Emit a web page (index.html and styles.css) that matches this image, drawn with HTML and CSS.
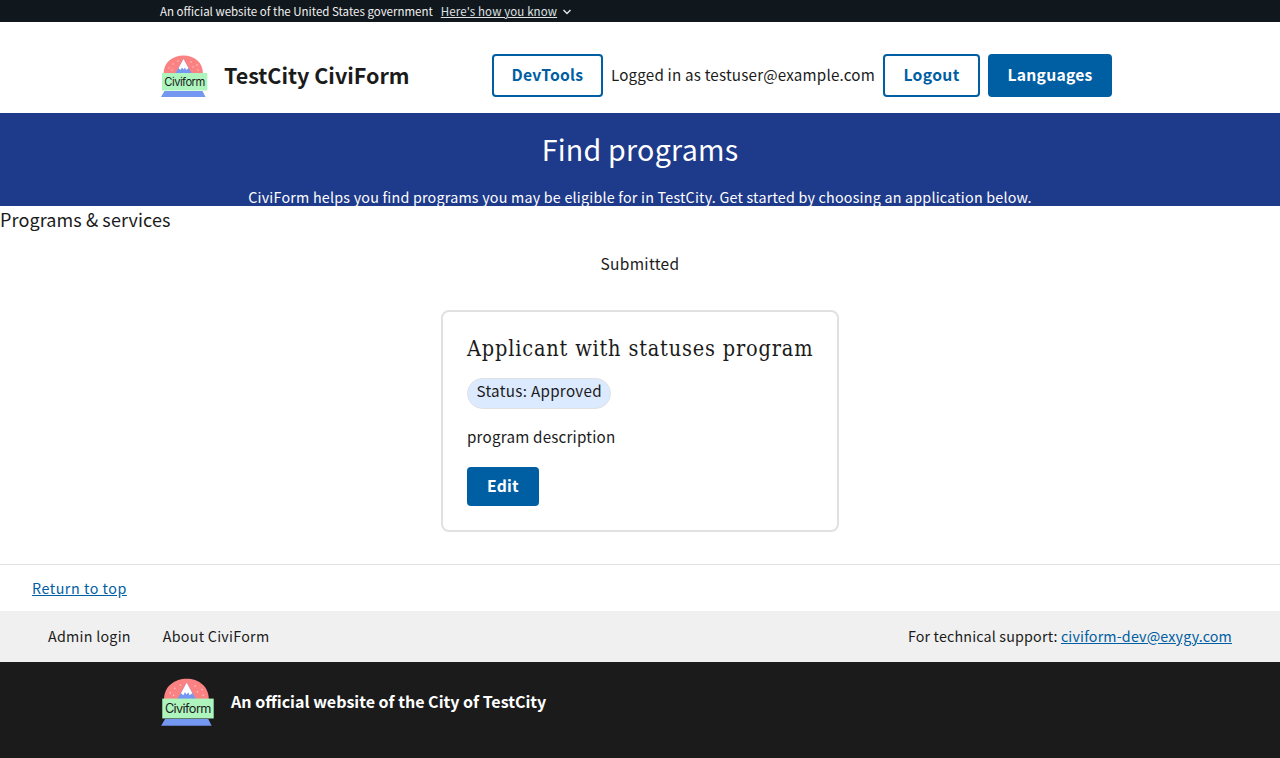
FILE: index.html
```html
<!DOCTYPE html>
<html lang="en">
<head>
<meta charset="utf-8">
<title>Find programs</title>
<link rel="stylesheet" href="styles.css">
</head>
<body>
<div class="banner">
  <span class="banner-text">An official website of the United States government</span>
  <a class="banner-link">Here's how you know</a>
  <svg class="chevron" viewBox="0 0 10 6"><path d="M1.500 1 5 4.500 8.500 1"/></svg>
</div>
<header class="header">
  <svg class="logo" viewBox="0 0 48 44">
    <g id="logo">
      <path fill="#fa8282" d="M3.500 20C3.500 8 13 1.500 23.500 1.500S43 8 43 20z"/>
      <g fill="#fff" opacity=".6"><circle cx="9" cy="14" r=".7"/><circle cx="13" cy="10" r=".7"/><circle cx="12" cy="16" r=".7"/><circle cx="18" cy="7" r=".7"/><circle cx="31" cy="8" r=".7"/><circle cx="33" cy="13" r=".7"/><circle cx="37" cy="11" r=".7"/><circle cx="38" cy="16" r=".7"/></g>
      <path fill="#7497f1" d="M15 20 23.500 5 32 20z"/>
      <path fill="#fff" d="M23.500 5 28.500 14.300 26 16 25 13.500 23.500 15.500 22 13.500 20.500 16 18.500 14.300z"/>
      <rect x="2" y="19" width="45.300" height="17.500" fill="#adf5bd"/>
      <path fill="#7497f1" d="M4.500 37H42.500L45.500 43H1z"/>
      <text x="4.300" y="31.500" font-family="Inter, sans-serif" font-size="11.200" textLength="41" fill="#1b1b1b">Civiform</text>
    </g>
  </svg>
  <div class="title">TestCity CiviForm</div>
  <nav class="nav">
    <a class="button outline devtools">DevTools</a>
    <span class="user">Logged in as testuser@example.com</span>
    <a class="button outline logout">Logout</a>
    <a class="button languages">Languages</a>
  </nav>
</header>
<section class="hero">
  <h1 class="hero-title"><span>Find programs</span></h1>
  <p class="hero-text">CiviForm helps you find programs you may be eligible for in TestCity. Get started by choosing an application below.</p>
</section>
<main class="main">
  <h2 class="services">Programs &amp; services</h2>
  <h3 class="submitted">Submitted</h3>
  <article class="card">
    <h4 class="card-title">Applicant with statuses program</h4>
    <div class="status">Status: Approved</div>
    <p class="description">program description</p>
    <a class="button edit">Edit</a>
  </article>
</main>
<footer>
  <div class="return"><a class="link">Return to top</a></div>
  <div class="footer-nav">
    <span class="admin">Admin login</span>
    <span class="about">About CiviForm</span>
    <span class="support">For technical support: <a class="link">civiform-dev@exygy.com</a></span>
  </div>
  <div class="identifier">
    <svg class="footer-logo" viewBox="0 0 48 44"><use href="#logo"/></svg>
    <strong class="identifier-text">An official website of the City of TestCity</strong>
  </div>
</footer>
</body>
</html>
```
FILE: styles.css
```css
* { box-sizing: border-box; }
body { margin: 0; background: #fff; color: #1b1b1b; font-family: "Noto Sans CJK SC", "Open Sans", sans-serif; font-size: 15.200px; white-space: nowrap; }
h1, h2, h3, h4, p { margin: 0; font-weight: 400; }
.banner { display: flex; align-items: center; height: 22px; padding-left: 160px; background: #11181d; color: #f0f0f0; font-size: 11.500px; line-height: 22px; }
.banner-link { margin-left: 8px; color: #dfe1e2; letter-spacing: .12px; text-decoration: underline; }
.chevron { width: 10px; height: 6px; margin: 1px 0 0 5px; fill: none; stroke: #dfe1e2; stroke-width: 1.500; }
.header { display: flex; align-items: center; height: 91px; padding: 32px 168px 16px 160px; }
.logo { width: 48px; height: 44px; }
.title { margin-left: 16px; padding-bottom: 2px; font-size: 21.500px; font-weight: 700; }
.nav { display: flex; align-items: center; gap: 8px; margin-left: auto; }
.user { padding-bottom: 4px; letter-spacing: .19px; }
.button { display: flex; align-items: center; justify-content: center; height: 43px; padding-bottom: 3px; border-radius: 4px; background: #005ea2; color: #fff; font-size: 15.700px; font-weight: 700; letter-spacing: .25px; }
.outline { border: 2px solid #005ea2; background: #fff; color: #005ea2; }
.devtools { width: 111px; }
.logout { width: 97px; letter-spacing: .35px; }
.languages { width: 124px; }
.hero { height: 93px; overflow: hidden; background: #1e3a8a; color: #fff; text-align: center; }
.hero-title { height: 72px; font-size: 28.600px; line-height: 71px; letter-spacing: .25px; }
.hero-text { font-size: 14.300px; line-height: 24px; letter-spacing: .217px; }
.main { display: flex; flex-direction: column; height: 358px; }
.services { height: 28px; font-size: 18px; line-height: 26px; letter-spacing: .1px; }
.submitted { height: 28px; margin-top: 16px; font-size: 15.500px; line-height: 26px; letter-spacing: .3px; text-align: center; }
.card { align-self: center; width: 398px; height: 222px; margin-top: 32px; padding: 24px; border: 2px solid #dfe1e2; border-radius: 8px; }
.card-title { height: 26px; font-family: "DejaVu Serif Condensed", "DejaVu Serif", serif; font-size: 21.500px; line-height: 25px; letter-spacing: .83px; }
.status { width: 144px; height: 31px; margin-top: 16px; padding-left: 8.500px; border: 1px solid #dfe1e2; border-radius: 16px; background: #dbeafe; line-height: 22px; letter-spacing: .3px; }
.description { height: 26px; margin-top: 16px; line-height: 22px; letter-spacing: .2px; }
.edit { width: 72px; height: 39px; margin-top: 16px; }
.return { height: 47px; padding-left: 32px; border-top: 1px solid #dfe1e2; font-size: 14.300px; line-height: 45px; letter-spacing: .53px; }
.link { color: #005ea2; text-decoration: underline; }
.footer-nav { display: flex; height: 51px; padding: 0 48px; background: #f0f0f0; font-size: 14.300px; line-height: 49px; letter-spacing: .25px; }
.about { margin-left: 32px; }
.support { margin-left: auto; letter-spacing: .16px; }
.identifier { display: flex; align-items: center; height: 96px; padding: 0 160px 16px; background: #1b1b1b; color: #fff; }
.footer-logo { width: 54.500px; height: 50px; }
.identifier-text { margin-left: 16.500px; padding-bottom: 2px; font-size: 16.050px; }
```
